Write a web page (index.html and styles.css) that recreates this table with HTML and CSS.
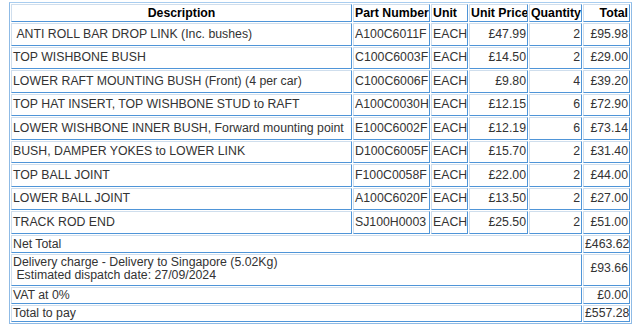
FILE: index.html
```html
<!DOCTYPE html>
<html>
<head>
<meta charset="utf-8">
<link rel="stylesheet" href="styles.css">
</head>
<body>
<table class="basket">
  <colgroup>
    <col class="c-desc"><col class="c-part"><col class="c-unit"><col class="c-price"><col class="c-qty"><col class="c-total">
  </colgroup>
  <thead>
    <tr>
      <th class="center">Description</th>
      <th>Part Number</th>
      <th>Unit</th>
      <th>Unit Price</th>
      <th>Quantity</th>
      <th class="right">Total</th>
    </tr>
  </thead>
  <tbody>
    <tr class="item"><td>&nbsp;ANTI ROLL BAR DROP LINK (Inc. bushes)</td><td>A100C6011F</td><td>EACH</td><td class="right">£47.99</td><td class="right">2</td><td class="right">£95.98</td></tr>
    <tr class="item"><td>TOP WISHBONE BUSH</td><td>C100C6003F</td><td>EACH</td><td class="right">£14.50</td><td class="right">2</td><td class="right">£29.00</td></tr>
    <tr class="item"><td>LOWER RAFT MOUNTING BUSH (Front) (4 per car)</td><td>C100C6006F</td><td>EACH</td><td class="right">£9.80</td><td class="right">4</td><td class="right">£39.20</td></tr>
    <tr class="item"><td>TOP HAT INSERT, TOP WISHBONE STUD to RAFT</td><td>A100C0030H</td><td>EACH</td><td class="right">£12.15</td><td class="right">6</td><td class="right">£72.90</td></tr>
    <tr class="item"><td>LOWER WISHBONE INNER BUSH, Forward mounting point</td><td>E100C6002F</td><td>EACH</td><td class="right">£12.19</td><td class="right">6</td><td class="right">£73.14</td></tr>
    <tr class="item"><td>BUSH, DAMPER YOKES to LOWER LINK</td><td>D100C6005F</td><td>EACH</td><td class="right">£15.70</td><td class="right">2</td><td class="right">£31.40</td></tr>
    <tr class="item"><td>TOP BALL JOINT</td><td>F100C0058F</td><td>EACH</td><td class="right">£22.00</td><td class="right">2</td><td class="right">£44.00</td></tr>
    <tr class="item"><td>LOWER BALL JOINT</td><td>A100C6020F</td><td>EACH</td><td class="right">£13.50</td><td class="right">2</td><td class="right">£27.00</td></tr>
    <tr class="item"><td>TRACK ROD END</td><td>SJ100H0003</td><td>EACH</td><td class="right">£25.50</td><td class="right">2</td><td class="right">£51.00</td></tr>
  </tbody>
  <tfoot>
    <tr class="sum net"><td colspan="5">Net Total</td><td class="right">£463.62</td></tr>
    <tr class="sum delivery"><td colspan="5">Delivery charge - Delivery to Singapore (5.02Kg)<br>&nbsp;Estimated dispatch date: 27/09/2024</td><td class="right">£93.66</td></tr>
    <tr class="sum"><td colspan="5">VAT at 0%</td><td class="right">£0.00</td></tr>
    <tr class="sum"><td colspan="5">Total to pay</td><td class="right">£557.28</td></tr>
  </tfoot>
</table>
</body>
</html>
```
FILE: styles.css
```css
html, body {
  margin: 0;
  padding: 0;
  background: #ffffff;
}
body {
  padding: 2px 0 0 9px;
  font-family: "Liberation Sans", Arial, sans-serif;
  font-size: 12.3px;
  line-height: 15px;
  color: #333333;
}
.basket {
  border-collapse: separate;
  border-spacing: 1px;
  border: 1px solid #8fbbe6;
  border-top-color: #a9cdef;
  table-layout: fixed;
  width: 623px;
}
.c-desc { width: 341px; }
.c-part { width: 77px; }
.c-unit { width: 37px; }
.c-price { width: 59px; }
.c-qty { width: 53px; }
.c-total { width: 47px; }

.basket th,
.basket td {
  box-sizing: border-box;
  border: 1px solid;
  border-color: #cfdeed #4f95d8 #4f95d8 #cfdeed;
  padding: 0 1px;
  text-align: left;
  vertical-align: middle;
  white-space: nowrap;
  overflow: hidden;
}
.basket th {
  font-weight: bold;
  color: #000000;
  height: 18px;
  padding: 0 1px;
}
.basket .center { text-align: center; }
.basket .right { text-align: right; }
.item td {
  height: 22.5px;
}
.sum td {
  height: 17px;
  line-height: 13px;
  padding: 1px 1px 0;
}
.net td {
  height: 18px;
}
.delivery td {
  height: 32px;
  padding: 0 1px 2px;
}
```
